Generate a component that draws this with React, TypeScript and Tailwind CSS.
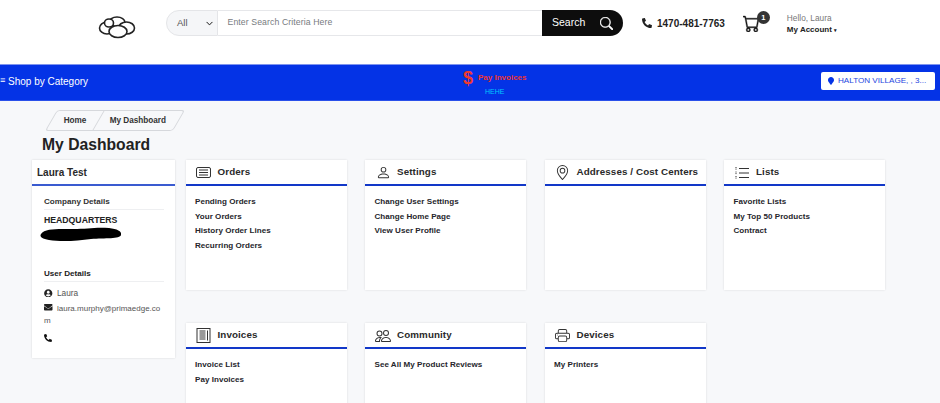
import React from 'react';
import {
  BsCart,
  BsChevronDown,
  BsGeoAlt,
  BsPeople,
  BsPerson,
  BsPrinter,
  BsSearch,
} from 'react-icons/bs';
import { FaEnvelope, FaMapMarker, FaPhoneAlt, FaUserCircle } from 'react-icons/fa';

const OrdersIcon = () => (
  <svg width="15" height="11" viewBox="0 0 15 11" fill="none" stroke="#333" strokeWidth="1">
    <rect x="0.5" y="0.5" width="14" height="10" rx="1.5" />
    <path d="M3 3h9M3 5.5h9M3 8h9" />
  </svg>
);

const InvoicesIcon = () => (
  <svg width="15" height="15" viewBox="0 0 15 15" fill="none" stroke="#333" strokeWidth="1">
    <rect x="1" y="0.5" width="13" height="14" />
    <path d="M3.5 3h6M3.5 5h6M3.5 7h6M3.5 9h6M3.5 11h6M11.5 2.5v10" />
  </svg>
);

const ListsIcon = () => (
  <svg width="14" height="12" viewBox="0 0 14 12" fill="none" stroke="#333" strokeWidth="1">
    <path d="M4 1.5h10M4 6h10M4 10.5h10" />
    <path d="M1 0v3M1 4.5v3M1 9v3" strokeDasharray="1 0.6" />
  </svg>
);

const Logo = () => (
  <svg width="38" height="24" viewBox="0 0 38 24" fill="#fff" stroke="#222" strokeWidth="1.6">
    <ellipse cx="19" cy="7.5" rx="8" ry="5.5" />
    <ellipse cx="28.5" cy="13" rx="8" ry="6" />
    <ellipse cx="9" cy="13" rx="7.5" ry="6" />
    <ellipse cx="11" cy="8" rx="4.5" ry="4" />
    <ellipse cx="20" cy="16.5" rx="9" ry="6" />
  </svg>
);

type Panel = { title: string; icon: React.ReactNode; links: string[] };

const topRow: Panel[] = [
  { title: 'Orders', icon: <OrdersIcon />, links: ['Pending Orders', 'Your Orders', 'History Order Lines', 'Recurring Orders'] },
  { title: 'Settings', icon: <BsPerson size={15} />, links: ['Change User Settings', 'Change Home Page', 'View User Profile'] },
  { title: 'Addresses / Cost Centers', icon: <BsGeoAlt size={15} />, links: [] },
  { title: 'Lists', icon: <ListsIcon />, links: ['Favorite Lists', 'My Top 50 Products', 'Contract'] },
];

const bottomRow: Panel[] = [
  { title: 'Invoices', icon: <InvoicesIcon />, links: ['Invoice List', 'Pay Invoices'] },
  { title: 'Community', icon: <BsPeople size={16} />, links: ['See All My Product Reviews'] },
  { title: 'Devices', icon: <BsPrinter size={15} />, links: ['My Printers'] },
];

const PanelCard = ({ panel }: { panel: Panel }) => (
  <div className="w-[161px] h-[130px] shrink-0 bg-white shadow-[0_0_2px_rgba(0,0,0,0.12)]">
    <div className="h-[26px] pt-[1px] flex items-center border-b-2 border-[#1238c8] text-[9.8px] font-bold text-[#2a2a2a] tracking-[0.1px]">
      <span className="w-[32px] pl-[4px] flex justify-center text-[#333]">{panel.icon}</span>
      <span className="whitespace-nowrap">{panel.title}</span>
    </div>
    <ul className="pt-[9px] pl-[9.5px]">
      {panel.links.map((link) => (
        <li key={link} className="h-[14.6px] leading-[14.6px] text-[8.05px] font-bold text-[#26262c] tracking-[0.03px]">
          {link}
        </li>
      ))}
    </ul>
  </div>
);

export default function App() {
  return (
    <div className="w-[940px] h-[403px] overflow-hidden bg-[#f7f8fa] font-['Liberation_Sans',Arial,sans-serif]">
      {/* Top header */}
      <header className="h-[64px] bg-white flex pt-[10px]">
        <div className="w-[166px] pl-[98px] pt-[5px] shrink-0">
          <Logo />
        </div>
        <div className="w-[457px] h-[26px] flex shrink-0">
          <div className="w-[52px] flex items-center justify-between pl-[10px] pr-[4px] bg-[#f5f6f8] border border-[#e4e5e8] rounded-l-full text-[9.5px] text-[#555]">
            <span>All</span>
            <BsChevronDown size={7} className="text-[#333]" strokeWidth={1} />
          </div>
          <div className="flex-1 flex items-center pl-[9.5px] bg-white border-y border-[#e6e7ea] text-[8.7px] tracking-[0.1px] text-[#777b80]">
            Enter Search Criteria Here
          </div>
          <div className="w-[81px] flex items-center justify-between pl-[10px] pr-[10px] bg-[#0d0d0d] rounded-r-full text-white text-[10.5px]">
            <span>Search</span>
            <BsSearch size={13} strokeWidth={0.5} />
          </div>
        </div>
        <div className="ml-[19px] h-[26px] flex items-center gap-[5px] text-[10px] font-bold text-[#222]">
          <FaPhoneAlt size={10} />
          <span className="whitespace-nowrap">1470-481-7763</span>
        </div>
        <div className="relative ml-[18px] w-[44px] h-[26px] pt-[5px]">
          <BsCart size={17} className="text-[#111]" strokeWidth={0.4} />
          <span className="absolute left-[14px] top-[1px] w-[13px] h-[13px] rounded-full bg-[#333] text-white text-[7.5px] font-bold flex items-center justify-center">
            1
          </span>
        </div>
        <div className="leading-[12px] pt-[2px]">
          <div className="text-[8.3px] text-[#777]">Hello, Laura</div>
          <div className="flex items-center gap-[2px] text-[8px] font-bold text-[#222]">
            My Account <span className="text-[5px]">▾</span>
          </div>
        </div>
      </header>

      {/* Blue bar */}
      <nav className="h-[37px] bg-[#0433e6] border-y border-[#7f94ee] border-b-[#2a50ea] flex">
        <div className="w-[463px] shrink-0 flex items-center pb-[3px] text-white text-[10px] whitespace-nowrap">
          <span className="w-[8px] text-[9px]">≡</span>
          <span>Shop by Category</span>
        </div>
        <div className="flex pt-[3px]">
          <span className="text-[#f03a2e] text-[18px] leading-[21px] font-bold">$</span>
          <div className="ml-[5px]">
            <div className="text-[8px] font-bold text-[#f0352f] leading-[18px] pt-[1px] whitespace-nowrap">Pay Invoices</div>
            <div className="text-[7px] text-[#00c8ff] pl-[7px] leading-[9px]">HEHE</div>
          </div>
        </div>
        <div className="ml-auto mr-[5px] mt-[7px] w-[114px] h-[18px] bg-white rounded-[2px] flex items-center pl-[6px] gap-[3px] text-[8.1px] text-[#2346e0] whitespace-nowrap">
          <FaMapMarker size={8} className="text-[#0433e6]" />
          <span>HALTON VILLAGE, , 3...</span>
        </div>
      </nav>

      {/* Breadcrumb */}
      <div className="h-[21px] mt-[9px] ml-[51px] flex w-[128px] -skew-x-[30deg] border border-[#d6d8dc] rounded-[3px] text-[8.2px] font-bold text-[#333]">
        <div className="w-[47px] pt-[2px] border-r border-[#d6d8dc] flex items-center justify-center">
          <span className="skew-x-[30deg]">Home</span>
        </div>
        <div className="flex-1 pt-[2px] flex items-center justify-center">
          <span className="skew-x-[30deg] whitespace-nowrap">My Dashboard</span>
        </div>
      </div>

      <h1 className="ml-[42px] mt-[4px] mb-[1px] h-[24px] leading-[20px] text-[15.7px] font-bold text-[#222]">My Dashboard</h1>

      {/* Dashboard */}
      <div className="flex pl-[32px] gap-[10.5px]">
        <aside className="w-[143px] h-[198px] shrink-0 bg-white shadow-[0_0_2px_rgba(0,0,0,0.14)]">
          <div className="h-[26px] pt-[1px] flex items-center pl-[5px] border-b-2 border-[#3a5bd0] text-[10px] font-bold text-[#2a2a2a]">
            Laura Test
          </div>
          <div className="pl-[12px] pr-[11px]">
            <div className="pt-[10px] pb-[1px] border-b border-[#eeeff1] text-[8.1px] font-bold text-[#333] leading-[12px]">Company Details</div>
            <div className="pt-[4px] text-[8.7px] font-bold text-[#222] leading-[12px]">HEADQUARTERS</div>
            <svg width="84" height="15" viewBox="0 0 84 15" className="-ml-[5px] mt-[1px] block">
              <path d="M2 7C6 1 20 2 34 2C48 2 56 0 70 1C78 2 83 4 82 8C81 12 66 11 52 12C38 14 22 15 10 13C4 12 0 10 2 7Z" fill="#000" />
            </svg>
            <div className="mt-[26px] pb-[1px] border-b border-[#eeeff1] text-[8.1px] font-bold text-[#222] leading-[12px]">User Details</div>
            <div className="mt-[5px] flex items-center gap-[4.5px] text-[8.3px] text-[#555] leading-[12px]">
              <FaUserCircle size={8.5} className="text-[#222]" />
              <span>Laura</span>
            </div>
            <div className="mt-[4px] text-[8px] text-[#555] leading-[12px] break-all">
              <FaEnvelope size={8.5} className="inline text-[#222] mr-[4.5px] align-[-0.5px]" />
              laura.murphy@primaedge.com
            </div>
            <FaPhoneAlt size={8} className="mt-[7px] text-[#111]" />
          </div>
        </aside>

        <div className="flex flex-col gap-[33px]">
          <div className="flex gap-[18.5px]">
            {topRow.map((panel) => (
              <PanelCard key={panel.title} panel={panel} />
            ))}
          </div>
          <div className="flex gap-[18.5px]">
            {bottomRow.map((panel) => (
              <PanelCard key={panel.title} panel={panel} />
            ))}
          </div>
        </div>
      </div>
    </div>
  );
}
